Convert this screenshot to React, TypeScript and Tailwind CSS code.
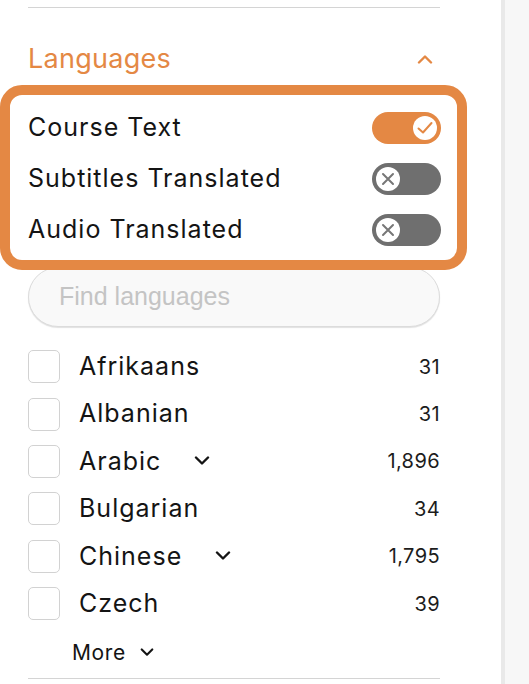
import React from "react";

const font = { fontFamily: "Inter, 'Noto Sans', sans-serif" };

const toggles = [
  { label: "Course Text", on: true },
  { label: "Subtitles Translated", on: false },
  { label: "Audio Translated", on: false },
];

const languages = [
  { name: "Afrikaans", count: "31", expandable: false },
  { name: "Albanian", count: "31", expandable: false },
  { name: "Arabic", count: "1,896", expandable: true },
  { name: "Bulgarian", count: "34", expandable: false },
  { name: "Chinese", count: "1,795", expandable: true },
  { name: "Czech", count: "39", expandable: false },
];

const Chevron = ({ up = false, className = "" }: { up?: boolean; className?: string }) => (
  <svg viewBox="0 0 16 10" className={className} fill="none">
    <path
      d={up ? "M2 8.5 L8 2.5 L14 8.5" : "M2 1.5 L8 7.5 L14 1.5"}
      stroke="currentColor"
      strokeWidth="2.4"
      strokeLinecap="round"
      strokeLinejoin="round"
    />
  </svg>
);

const Toggle = ({ on }: { on: boolean }) => (
  <div
    className={`flex h-[32px] w-[69px] shrink-0 items-center rounded-full px-[4px] ${
      on ? "justify-end bg-[#e48844]" : "justify-start bg-[#6f6f6f]"
    }`}
  >
    <div className="flex h-[24px] w-[24px] items-center justify-center rounded-full bg-white">
      {on ? (
        <svg viewBox="0 0 24 24" className="h-[24px] w-[24px]" fill="none">
          <path
            d="M5.5 12.5 L10 16.5 L18.5 7"
            stroke="#e48844"
            strokeWidth="2"
            strokeLinecap="round"
            strokeLinejoin="round"
          />
        </svg>
      ) : (
        <svg viewBox="0 0 24 24" className="h-[24px] w-[24px]" fill="none">
          <path
            d="M7 7 L17 17 M17 7 L7 17"
            stroke="#777777"
            strokeWidth="2"
            strokeLinecap="round"
          />
        </svg>
      )}
    </div>
  </div>
);

export default function App() {
  return (
    <div className="flex min-h-screen w-full bg-[#f7f7f7]" style={font}>
      <div className="w-[501px] shrink-0 bg-white pt-[7px]">
        <div className="ml-[28px] mr-[61px] h-px bg-[#d4d4d4]" />

        <div className="ml-[28px] mr-[61px] mt-[31px] flex h-[40px] items-center justify-between">
          <span className="text-[27px] font-normal tracking-[0.01em] text-[#e48844]">
            Languages
          </span>
          <Chevron up className="mr-[7px] h-[10px] w-[16px] text-[#e48844]" />
        </div>

        <div className="relative z-10 mt-[6px] w-[467px] rounded-[22px] border-[10px] border-[#e48844] bg-white pb-[14px] pl-[18px] pr-[16px] pt-[17px]">
          <div className="flex flex-col gap-[19px]">
            {toggles.map((t) => (
              <div key={t.label} className="flex h-[32px] items-center justify-between">
                <span className="text-[25px] tracking-[0.04em] text-[#141414]">{t.label}</span>
                <Toggle on={t.on} />
              </div>
            ))}
          </div>
        </div>

        <div className="-mt-[3px] ml-[28px] mr-[61px]">
          <div className="flex h-[60px] items-center rounded-full border border-[#dcdcdc] bg-[#f9f9f9] pl-[30px] shadow-[0_1px_1px_rgba(0,0,0,0.12)]">
            <span
              className="text-[25px] text-[#c4c4c4]"
              style={{ fontFamily: "'Liberation Sans', Arial, sans-serif" }}
            >
              Find languages
            </span>
          </div>

          <div className="mt-[16px] flex flex-col">
            {languages.map((l) => (
              <div key={l.name} className="flex h-[47.4px] items-center">
                <div className="h-[33px] w-[32px] shrink-0 rounded-[5px] border border-[#d2d2d2] bg-white" />
                <span className="ml-[19px] text-[25px] tracking-[0.04em] text-[#141414]">
                  {l.name}
                </span>
                {l.expandable && (
                  <Chevron className="ml-[33px] h-[10px] w-[16px] text-[#141414]" />
                )}
                <span className="ml-auto text-[20px] tracking-[0.02em] text-[#1c1c1c]">
                  {l.count}
                </span>
              </div>
            ))}
          </div>

          <div className="flex h-[51px] items-center pl-[44px]">
            <span className="text-[21px] tracking-[0.03em] text-[#141414]">More</span>
            <Chevron className="ml-[14px] h-[9px] w-[14px] text-[#141414]" />
          </div>

          <div className="h-px bg-[#d4d4d4]" />
        </div>
      </div>
      <div className="w-[4px] shrink-0 bg-[#e9e9e9]" />
      <div className="flex-1 bg-[#f7f7f7]" />
    </div>
  );
}
